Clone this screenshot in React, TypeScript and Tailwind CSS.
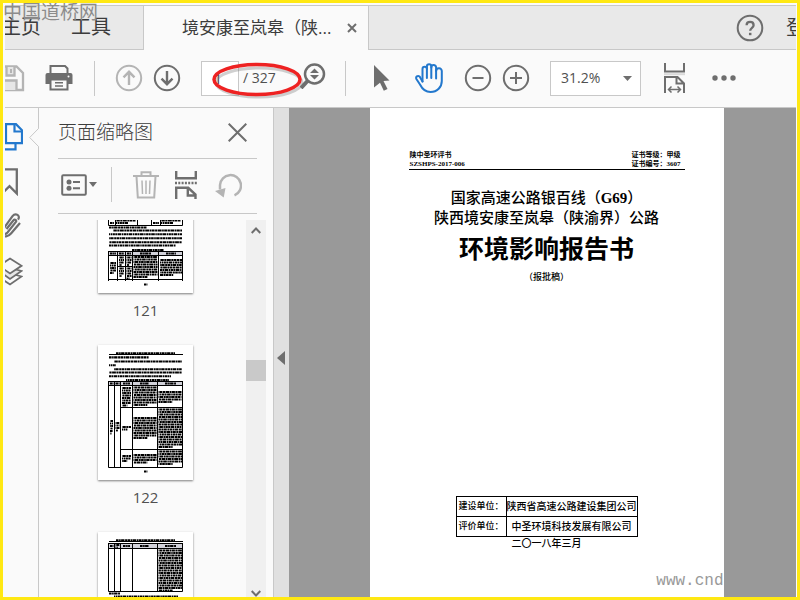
import type { ReactNode } from "react";
import { useState } from "react";

const INK = "#6e6e6e";
const FAINT = "#b4b4b4";

const DASHES = [
  "2.6 .5 1.6 .4 3.4 .6 2 .4",
  "1.7 .4 3 .5 2.2 .5 3.8 .5",
  "3.6 .6 1.4 .5 2.4 .4 1.8 .5",
];

type TextLineProps = { x: number; y: number; to: number; seed?: number; weight?: number };

const TextLine = ({ x, y, to, seed = 0, weight = 2.1 }: TextLineProps) => (
  <line
    x1={x}
    y1={y}
    x2={to}
    y2={y}
    stroke="#000"
    strokeWidth={weight}
    strokeDasharray={DASHES[seed % DASHES.length]}
    strokeDashoffset={seed * 1.3}
  />
);

type TextBlockProps = { x: number; y: number; to: number; bottom: number };

const TextBlock = ({ x, y, to, bottom }: TextBlockProps) => {
  const count = Math.max(1, Math.round((bottom - y) / 2.5));

  return (
    <>
      {Array.from({ length: count }, (_, i) => (
        <TextLine
          key={i}
          x={x}
          y={y + 1 + i * 2.5}
          to={i === count - 1 ? x + (to - x) * 0.6 : to}
          seed={i + 1}
          weight={1.8}
        />
      ))}
    </>
  );
};

const Page121 = () => (
  <>
    <path d="M10.5 50V67.5H84.5V50M17.5 60V67M39.5 60V67M53.5 60V67M62.5 60V67" />
    <TextBlock x={18} y={61.5} to={38} bottom={66} />
    <TextBlock x={63} y={61.5} to={83} bottom={67} />
    <TextLine x={12} y={65} to={16} />
    <TextLine x={55} y={65} to={61} />
    <TextLine x={11} y={69.5} to={49} />
    <TextLine x={15} y={72.5} to={84} seed={1} />
    <TextLine x={11} y={76.3} to={84} seed={2} />
    <TextLine x={11} y={80.3} to={84} seed={3} />
    <TextLine x={11} y={84.3} to={84} seed={4} />
    <TextLine x={11} y={87.5} to={78} seed={5} />
    <TextLine x={34} y={92} to={66} />
    <rect x="10.5" y="93.5" width="74" height="4" fill="#d2d2da" />
    <path d="M10.500 123V93.500H84.500V123M10.500 121.500H84.500M19.500 93V123M27.500 93V123M34.500 93V123M60.500 93V123M19.500 108.500H34.500" />
    <TextLine x={12} y={95.5} to={18} />
    <TextLine x={21} y={95.5} to={26} />
    <TextLine x={29} y={95.5} to={33} />
    <TextLine x={42} y={95.5} to={53} />
    <TextLine x={68} y={95.5} to={78} />
    <TextBlock x={12} y={104} to={18} bottom={116} />
    <TextBlock x={21} y={98.5} to={26} bottom={108} />
    <TextBlock x={28.5} y={98.5} to={33.5} bottom={108} />
    <TextBlock x={21} y={109.5} to={26} bottom={120} />
    <TextBlock x={28.5} y={109.5} to={33.5} bottom={121} />
    <TextBlock x={35.5} y={98} to={59.5} bottom={121} />
    <TextBlock x={62} y={101} to={84} bottom={118} />
    <TextLine x={46} y={126.5} to={49.5} />
  </>
);

const Page122 = () => (
  <>
    <TextLine x={18} y={8.3} to={77} />
    <path d="M11 9.5H85" />
    <TextLine x={11} y={12.4} to={51} />
    <TextLine x={16} y={16.5} to={84} seed={1} />
    <TextLine x={11} y={20.3} to={18} seed={2} />
    <TextLine x={16} y={24.3} to={84} seed={3} />
    <TextLine x={11} y={27.5} to={84} seed={4} />
    <TextLine x={11} y={31.3} to={73} seed={5} />
    <TextLine x={28} y={35} to={71} seed={2} />
    <rect x="10.5" y="36.5" width="74" height="4" fill="#d2d2da" />
    <path d="M10.500 36.500H84.500V122.500H10.500ZM10.500 40.500H84.500M16.500 36V122M22.500 36V122M34.500 36V122M59.500 36V122M22.500 62.500H84.500M22.500 104.500H84.500" />
    <TextLine x={12} y={38.5} to={15.5} />
    <TextLine x={17.5} y={38.5} to={21.5} />
    <TextLine x={25} y={38.5} to={32} />
    <TextLine x={42} y={38.5} to={51} />
    <TextLine x={67} y={38.5} to={78} />
    <TextBlock x={12} y={75} to={15} bottom={89} />
    <TextBlock x={17.5} y={77} to={21.5} bottom={87} />
    <TextBlock x={24} y={42} to={33} bottom={61} />
    <TextBlock x={24} y={81} to={33} bottom={86} />
    <TextBlock x={24} y={110} to={33} bottom={118} />
    <TextBlock x={35.5} y={41.5} to={58.5} bottom={62} />
    <TextBlock x={35.5} y={72} to={58.5} bottom={95} />
    <TextBlock x={35.5} y={109} to={58.5} bottom={118} />
    <TextBlock x={60.5} y={46} to={83.5} bottom={59} />
    <TextBlock x={60.5} y={63.5} to={84} bottom={104} />
    <TextBlock x={60.5} y={105.5} to={84} bottom={121} />
    <TextLine x={46} y={126.5} to={49.5} />
  </>
);

const Page123 = () => (
  <>
    <TextLine x={18} y={8.3} to={77} />
    <path d="M11 9.5H85" />
    <rect x="10.5" y="11.5" width="74" height="5" fill="#d2d2da" />
    <path d="M10.500 11.500H84.500V59.500H10.500ZM10.500 16.500H84.500M16.500 11V59M22.500 11V59M34.500 11V59M59.500 11V59" />
    <TextLine x={12} y={14} to={15.5} />
    <TextBlock x={17.5} y={12} to={21.5} bottom={16} />
    <TextLine x={25} y={14} to={32} />
    <TextLine x={42} y={14} to={51} />
    <TextLine x={67} y={14} to={78} />
    <TextBlock x={60.5} y={17.5} to={84} bottom={59} />
    <TextLine x={11} y={61.5} to={22} />
    <TextLine x={16} y={64.5} to={80} seed={2} />
  </>
);

const thumbnails = [
  { number: 121, drawing: <Page121 /> },
  { number: 122, drawing: <Page122 /> },
  { number: 123, drawing: <Page123 /> },
];

type IconProps = {
  className: string;
  viewBox: string;
  color?: string;
  width?: number;
  children: ReactNode;
};

const Icon = ({ className, viewBox, color = INK, width = 2, children }: IconProps) => (
  <svg
    className={`shrink-0 ${className}`}
    viewBox={viewBox}
    fill="none"
    stroke={color}
    strokeWidth={width}
    aria-hidden="true"
  >
    {children}
  </svg>
);

const Divider = ({ className }: { className: string }) => (
  <div className={`w-px h-[35px] shrink-0 bg-[#c8c8c8] ${className}`} />
);

const TabBar = () => (
  <header className="flex h-[45px] shrink-0 border-t border-[#c8c8c8] text-[#3c3c3c]">
    <nav className="flex w-[139px] shrink-0 overflow-hidden whitespace-nowrap border-r border-b border-[#c8c8c8] bg-[#e9e9e9] text-xl leading-[42px]">
      <a href="#home" className="-ml-1">
        主页
      </a>
      <a href="#tools" className="ml-[30px]">
        工具
      </a>
    </nav>
    <div className="flex w-[224px] shrink-0 items-center whitespace-nowrap pl-[38px] text-[17px]">
      <span>境安康至岚皋（陕...</span>
      <button type="button" aria-label="关闭标签" className="ml-4">
        <Icon className="size-[10px]" viewBox="0 0 10 10">
          <path d="M1 1l8 8M9 1l-8 8" />
        </Icon>
      </button>
    </div>
    <div className="flex flex-1 items-center justify-end overflow-hidden border-b border-l border-[#c8c8c8] bg-[#e9e9e9]">
      <button type="button" aria-label="帮助">
        <Icon className="size-[28px]" viewBox="0 0 28 28">
          <circle cx="14" cy="14" r="12.3" />
          <path d="M10.6 11.2c0-4.4 7-4.4 7 0 0 2.6-3.4 2.7-3.4 5.6" strokeWidth="2.3" />
          <path d="M14.2 18.8v2.4" strokeWidth="2.5" />
        </Icon>
      </button>
      <a href="#login" className="ml-[22px] w-[10px] overflow-hidden whitespace-nowrap text-xl">
        登录
      </a>
    </div>
  </header>
);

const PageBox = () => {
  const [page, setPage] = useState("1");

  return (
    <div className="relative ml-5 flex items-center">
      <input
        aria-label="页码"
        className="h-[35px] w-[38px] border border-[#c8c8c8] bg-white pl-[12px] text-sm text-[#3c3c3c] outline-none"
        value={page}
        onChange={(e) => setPage(e.target.value)}
      />
      <span className="ml-1 w-[57px] whitespace-nowrap text-sm text-[#505050]">/ 327</span>
      <button type="button" aria-label="缩放" className="-mt-1">
        <Icon className="h-[26px] w-[26px]" viewBox="0 0 26 26" width={2.5}>
          <circle cx="14.5" cy="11" r="9.5" />
          <path d="M8 17.5L1 25" strokeWidth="4" />
          <path d="M14.5 5.500l4.500 4.500h-9zM14.500 16.500l4.500-4.500h-9z" fill={INK} stroke="none" />
        </Icon>
      </button>
      <svg
        className="pointer-events-none absolute top-0 left-[8px] h-[40px] w-[98px]"
        viewBox="0 0 98 40"
        fill="none"
        aria-hidden="true"
      >
        <ellipse cx="50" cy="21.5" rx="43" ry="14.5" stroke="#777" strokeOpacity=".35" strokeWidth="3" />
        <ellipse cx="48" cy="18.5" rx="43" ry="15" stroke="#ee2222" strokeWidth="3.5" />
      </svg>
    </div>
  );
};

const Toolbar = () => (
  <div className="flex h-[58px] shrink-0 items-center overflow-hidden border-b border-[#c8c8c8] pb-px">
    <button type="button" aria-label="保存" className="-ml-[7px]">
      <Icon className="h-[27px] w-[27px]" viewBox="0 0 27 27" color={FAINT} width={2.3}>
        <path d="M1.5 1.5h17l6.500 6.500v17H1.500z" />
        <path d="M8.500 2v8.500h8V2M4.500 25V15.500h14V25" fill="#e6e6e6" />
        <path d="M13 4v4" strokeWidth="2" />
      </Icon>
    </button>
    <button type="button" aria-label="打印" className="ml-5">
      <Icon className="h-[28px] w-[28px]" viewBox="0 0 28 28">
        <path d="M5.500 9V2h14.500l2.500 2.500V9" />
        <path d="M2.500 9h23a2 2 0 0 1 2 2v9h-5v-4H5.500v4h-5v-9a2 2 0 0 1 2-2z" fill={INK} stroke="none" />
        <path d="M5.500 15.500h17v10h-17z" fill="#fafafa" />
        <path d="M10 18.800h8M10 22h8" strokeWidth="1.5" />
        <circle cx="23.5" cy="12.5" r="1" fill="#fafafa" stroke="none" />
      </Icon>
    </button>
    <Divider className="ml-[21px]" />
    <button type="button" aria-label="上一页" className="ml-5">
      <Icon className="size-[28px]" viewBox="0 0 28 28" color={FAINT}>
        <circle cx="14" cy="14" r="12.2" />
        <path d="M14 21V8M8.500 13.300L14 7.800l5.500 5.500" strokeWidth="2.4" />
      </Icon>
    </button>
    <button type="button" aria-label="下一页" className="ml-[10px]">
      <Icon className="size-[28px]" viewBox="0 0 28 28">
        <circle cx="14" cy="14" r="12.2" />
        <path d="M14 7v13M8.500 14.700l5.500 5.500 5.500-5.500" strokeWidth="2.4" />
      </Icon>
    </button>
    <PageBox />
    <Divider className="ml-[19px]" />
    <button type="button" aria-label="选择" className="ml-[28px]">
      <Icon className="h-[26px] w-[16px]" viewBox="0 0 16 26">
        <path d="M0 0l15.500 15.500-6 .6 4 8-3.700 1.700-3.800-8L0 22.500z" fill={INK} stroke="none" />
      </Icon>
    </button>
    <button type="button" aria-label="抓手" className="ml-[25px]">
      <Icon className="h-[30px] w-[28px]" viewBox="0 0 28 30" color="#2378cd">
        <g strokeLinecap="round" strokeLinejoin="round">
          <path d="M7.500 18.500V6a2.200 2.200 0 0 1 4.400 0v9" />
          <path d="M11.900 6V3.400a2.200 2.200 0 0 1 4.400 0V15" />
          <path d="M16.300 4.500a2.200 2.200 0 0 1 4.800 0V15.500" />
          <path d="M21.100 8a2.600 2.600 0 0 1 5.700.2V18c0 6-4.500 11-11.300 11-5.500 0-8.500-3.500-10.500-7.500L1.400 16c-1-2.200 1.200-4 3.200-2.500L7.500 18.500" />
        </g>
      </Icon>
    </button>
    <button type="button" aria-label="缩小" className="ml-[21px]">
      <Icon className="size-[28px]" viewBox="0 0 28 28">
        <circle cx="14" cy="14" r="12.2" />
        <path d="M8.500 14h11" />
      </Icon>
    </button>
    <button type="button" aria-label="放大" className="ml-[10px]">
      <Icon className="size-[28px]" viewBox="0 0 28 28">
        <circle cx="14" cy="14" r="12.2" />
        <path d="M8 14h12M14 8v12" />
      </Icon>
    </button>
    <div className="relative ml-5 shrink-0">
      <select
        aria-label="缩放比例"
        defaultValue="31.2%"
        className="block h-[35px] w-[91px] appearance-none border border-[#c8c8c8] bg-white pl-[10px] text-sm text-[#505050] outline-none"
      >
        <option>31.2%</option>
        <option>50%</option>
        <option>100%</option>
      </select>
      <Icon className="pointer-events-none absolute top-[15px] right-[9px] h-[5px] w-[9px]" viewBox="0 0 9 5">
        <path d="M0 0h9L4.500 5z" fill={INK} stroke="none" />
      </Icon>
    </div>
    <button type="button" aria-label="适合宽度" className="ml-[23px]">
      <Icon className="h-[30px] w-[21px]" viewBox="0 0 21 30">
        <path d="M1 0v8.500h19V0" />
        <path d="M0 11.200h21" stroke="#dadada" strokeWidth="2" />
        <path d="M1 30V14h12.500l6.500 6.500V30M12.500 14v6.500H20" />
        <path d="M4.500 26.500h12M7.500 23.500l-3 3 3 3M13.500 23.500l3 3-3 3" strokeWidth="1.5" />
      </Icon>
    </button>
    <button type="button" aria-label="更多" className="ml-[27px]">
      <Icon className="h-[6px] w-[24px]" viewBox="0 0 24 6">
        <g fill={INK} stroke="none">
          <circle cx="3" cy="3" r="2.7" />
          <circle cx="12" cy="3" r="2.7" />
          <circle cx="21" cy="3" r="2.7" />
        </g>
      </Icon>
    </button>
  </div>
);

const NavRail = () => (
  <nav className="relative flex w-[34px] shrink-0 flex-col items-start border-r border-[#c8c8c8] pt-[15px]">
    <button type="button" aria-label="页面缩略图" className="w-[19px] overflow-hidden">
      <Icon className="-ml-1 h-[28px] w-[22px]" viewBox="0 0 22 28" color="#2378cd" width={2.2}>
        <path d="M5 1.200h10l6 6v13H5z" />
        <path d="M13.500 1.500V8.500H21" />
        <path d="M0 5.500v20.800h14.500v-5.500" />
      </Icon>
    </button>
    <button type="button" aria-label="书签" className="mt-[17px] w-[14px] overflow-hidden">
      <Icon className="-ml-1 h-[28px] w-[17px]" viewBox="0 0 17 28" width={2.3}>
        <path d="M1 1.300h14.800v24.200l-7.300-7.300L1 25.500z" />
      </Icon>
    </button>
    <button type="button" aria-label="附件" className="mt-[15px] w-[16px] overflow-hidden">
      <Icon className="-ml-[5px] h-[27px] w-[21px]" viewBox="0 0 21 27" width={2.2}>
        <path d="M6.500 18l6.800-8.500c1.500-2 3.800-.2 2.400 1.700L7.500 21.500c-2.800 3.200-7 .2-4.500-3.200L12.500 5.200c3-4 8.500-.6 5.500 3.500M20 12L11 22.500c-3 3.500-7 3.500-9 1.500" />
      </Icon>
    </button>
    <button type="button" aria-label="图层" className="mt-[19px] w-[18px] overflow-hidden">
      <Icon className="-ml-1 h-[29px] w-[22px]" viewBox="0 0 22 29" width={1.8}>
        <path d="M9 16.500l11.500 3L9 27.500-2 20z" fill="#fafafa" />
        <path d="M9 11l11.500 3L9 22-2 14z" fill="#e6e6e6" />
        <path d="M9 1.500l11.500 7.300L9 16.500-2 8.800z" fill="#fafafa" />
      </Icon>
    </button>
    <Icon className="absolute top-[20px] -right-px h-[19px] w-[10px]" viewBox="0 0 10 19" color="#c8c8c8" width={1}>
      <path d="M10 0L.7 9.500 10 19z" fill="#fafafa" stroke="none" />
      <path d="M9.500 0v.5L.7 9.500l8.800 9v.5" />
    </Icon>
  </nav>
);

const ThumbnailPanel = () => (
  <aside className="flex w-[235px] shrink-0 flex-col border-r border-[#c8c8c8] pl-[19px]">
    <div className="mr-4 flex h-[51px] shrink-0 items-center justify-between border-b border-[#c8c8c8] pr-[10px] pb-[2px]">
      <h2 className="text-[19px] font-light text-[#3c3c3c]">页面缩略图</h2>
      <button type="button" aria-label="关闭面板">
        <Icon className="size-[19px]" viewBox="0 0 19 19">
          <path d="M.7.7l17.600 17.600M18.300.7L.7 18.300" />
        </Icon>
      </button>
    </div>
    <div className="mr-4 flex h-[55px] shrink-0 items-center border-b border-[#c8c8c8] pb-[3px] pl-[3px]">
      <button type="button" aria-label="选项" className="flex items-center gap-[2px]">
        <Icon className="h-[22px] w-[26px]" viewBox="0 0 26 22">
          <rect x="1.200" y="1.200" width="23.600" height="19.600" rx="1" />
          <circle cx="8" cy="8" r="2.5" fill={INK} stroke="none" />
          <circle cx="8" cy="14.3" r="2.5" fill={INK} stroke="none" />
          <path d="M12 8h7M12 14.300h7" />
        </Icon>
        <Icon className="h-[5px] w-[8px]" viewBox="0 0 8 5">
          <path d="M0 0h8L4 5z" fill={INK} stroke="none" />
        </Icon>
      </button>
      <Divider className="ml-[14px]" />
      <button type="button" aria-label="删除" className="ml-[21px]">
        <Icon className="h-[28px] w-[26px]" viewBox="0 0 26 28" color={FAINT}>
          <path d="M0 5h26M8.500 4.500V1.200h9v3.300M3.500 5.500l1.300 21h16.400l1.300-21" />
          <path d="M9 9.500l.5 13.500M13 9.500V23M17 9.500L16.500 23" strokeWidth="1.5" />
        </Icon>
      </button>
      <button type="button" aria-label="拆分" className="ml-[16px]">
        <Icon className="h-[28px] w-[22px]" viewBox="0 0 22 28" width={2.4}>
          <path d="M1.200 0v7.200h19.600V0" />
          <path d="M0 12h22" strokeDasharray="2 1.300" />
          <path d="M1.200 28V16.800h12l7.300 6.700V28M12.800 17v7.500H21" />
        </Icon>
      </button>
      <button type="button" aria-label="旋转" className="ml-[18px]">
        <Icon className="h-[26px] w-[27px]" viewBox="0 0 27 26" color={FAINT} width={2.5}>
          <path d="M5 17.500V13A10.500 10.500 0 1 1 19.500 23.300" />
          <path d="M0 19l10.500-3-1.800 9.500z" fill={FAINT} stroke="none" />
        </Icon>
      </button>
    </div>
    <div className="mt-[6px] flex min-h-0 flex-1">
      <ul className="flex-1 overflow-hidden">
        {thumbnails.map(({ number, drawing }) => (
          <li key={number} className="flex h-[187px] flex-col items-center pr-[13px] first:-mt-[62px]">
            <svg
              className="h-[135px] w-[95px] shrink-0 bg-white shadow-[0_1px_2px_#00000080]"
              viewBox="0 0 95 135"
              fill="none"
              stroke="#000"
              strokeWidth="1"
              role="img"
              aria-label={`第 ${number} 页`}
            >
              {drawing}
            </svg>
            <span className="mt-[5px] text-[15px] leading-6 text-[#505050]">{number}</span>
          </li>
        ))}
      </ul>
      <div className="mr-[7px] flex w-5 shrink-0 flex-col items-center bg-[#f0f0f0] pt-[7px]">
        <Icon className="h-[7px] w-[10px]" viewBox="0 0 10 7">
          <path d="M.7 6L5 1.500 9.300 6" />
        </Icon>
        <div className="mt-[126px] h-[21px] w-full bg-[#c9c9c9]" />
        <Icon className="mt-auto h-[7px] w-[10px]" viewBox="0 0 10 7">
          <path d="M.7 1L5 5.500 9.300 1" />
        </Icon>
      </div>
    </div>
  </aside>
);

const DocumentPage = () => (
  <article className="relative flex w-[354px] shrink-0 flex-col items-center overflow-hidden bg-white pt-[43px] font-['Liberation_Serif','Noto_Sans_CJK_SC',serif] font-medium text-black">
    <div className="flex w-[276px] justify-between border-b border-black pr-1 pl-px text-[7px] leading-[9px] font-bold">
      <p>
        陕中圣环评书
        <br />
        SZSHPS-2017-006
      </p>
      <p>
        证书等级：甲级
        <br />
        证书编号：3607
      </p>
    </div>
    <h1 className="mt-[18px] text-center text-[15px] leading-5">
      国家高速公路银百线（<b>G69</b>）
      <br />
      陕西境安康至岚皋（陕渝界）公路
    </h1>
    <p className="mt-1 text-[25px] leading-9 font-bold">环境影响报告书</p>
    <p className="mt-[3px] text-[9px] leading-3">（报批稿）</p>
    <table className="mt-[213px] border-collapse text-[10px] leading-[19px]">
      <tbody>
        <tr>
          <th className="w-[50px] border border-black p-0 text-[9px] font-medium">建设单位：</th>
          <td className="border border-black p-0 text-center whitespace-nowrap">陕西省高速公路建设集团公司</td>
        </tr>
        <tr>
          <th className="border border-black p-0 text-[9px] font-medium">评价单位：</th>
          <td className="border border-black p-0 text-center whitespace-nowrap">中圣环境科技发展有限公司</td>
        </tr>
      </tbody>
    </table>
    <p className="text-[10px] leading-[14px]">二〇一八年三月</p>
    <span className="absolute right-0 bottom-1 font-['Liberation_Mono',monospace] text-base font-normal text-[#999]">
      www.cnd
    </span>
  </article>
);

const App = () => (
  <div className="relative flex h-screen flex-col overflow-hidden border-[3px] border-[#ffe813] bg-[#fafafa] pt-[2px] pr-px pl-[2px] font-['Open_Sans','Noto_Sans_CJK_SC',sans-serif]">
    <TabBar />
    <Toolbar />
    <div className="flex min-h-0 flex-1">
      <NavRail />
      <ThumbnailPanel />
      <button
        type="button"
        aria-label="折叠面板"
        className="flex w-[15px] shrink-0 items-center justify-center bg-[#e0e0e0] pt-[10px] pr-px"
      >
        <Icon className="h-[14px] w-[8px]" viewBox="0 0 8 14">
          <path d="M8 0v14L0 7z" fill={INK} stroke="none" />
        </Icon>
      </button>
      <main className="flex flex-1 justify-center overflow-hidden bg-[#999] pl-2">
        <DocumentPage />
      </main>
    </div>
    <span className="pointer-events-none absolute -top-[2px] left-0 text-[19px] leading-[22px] whitespace-nowrap text-[#8c8c8c]">
      中国道桥网
    </span>
  </div>
);

export default App;
